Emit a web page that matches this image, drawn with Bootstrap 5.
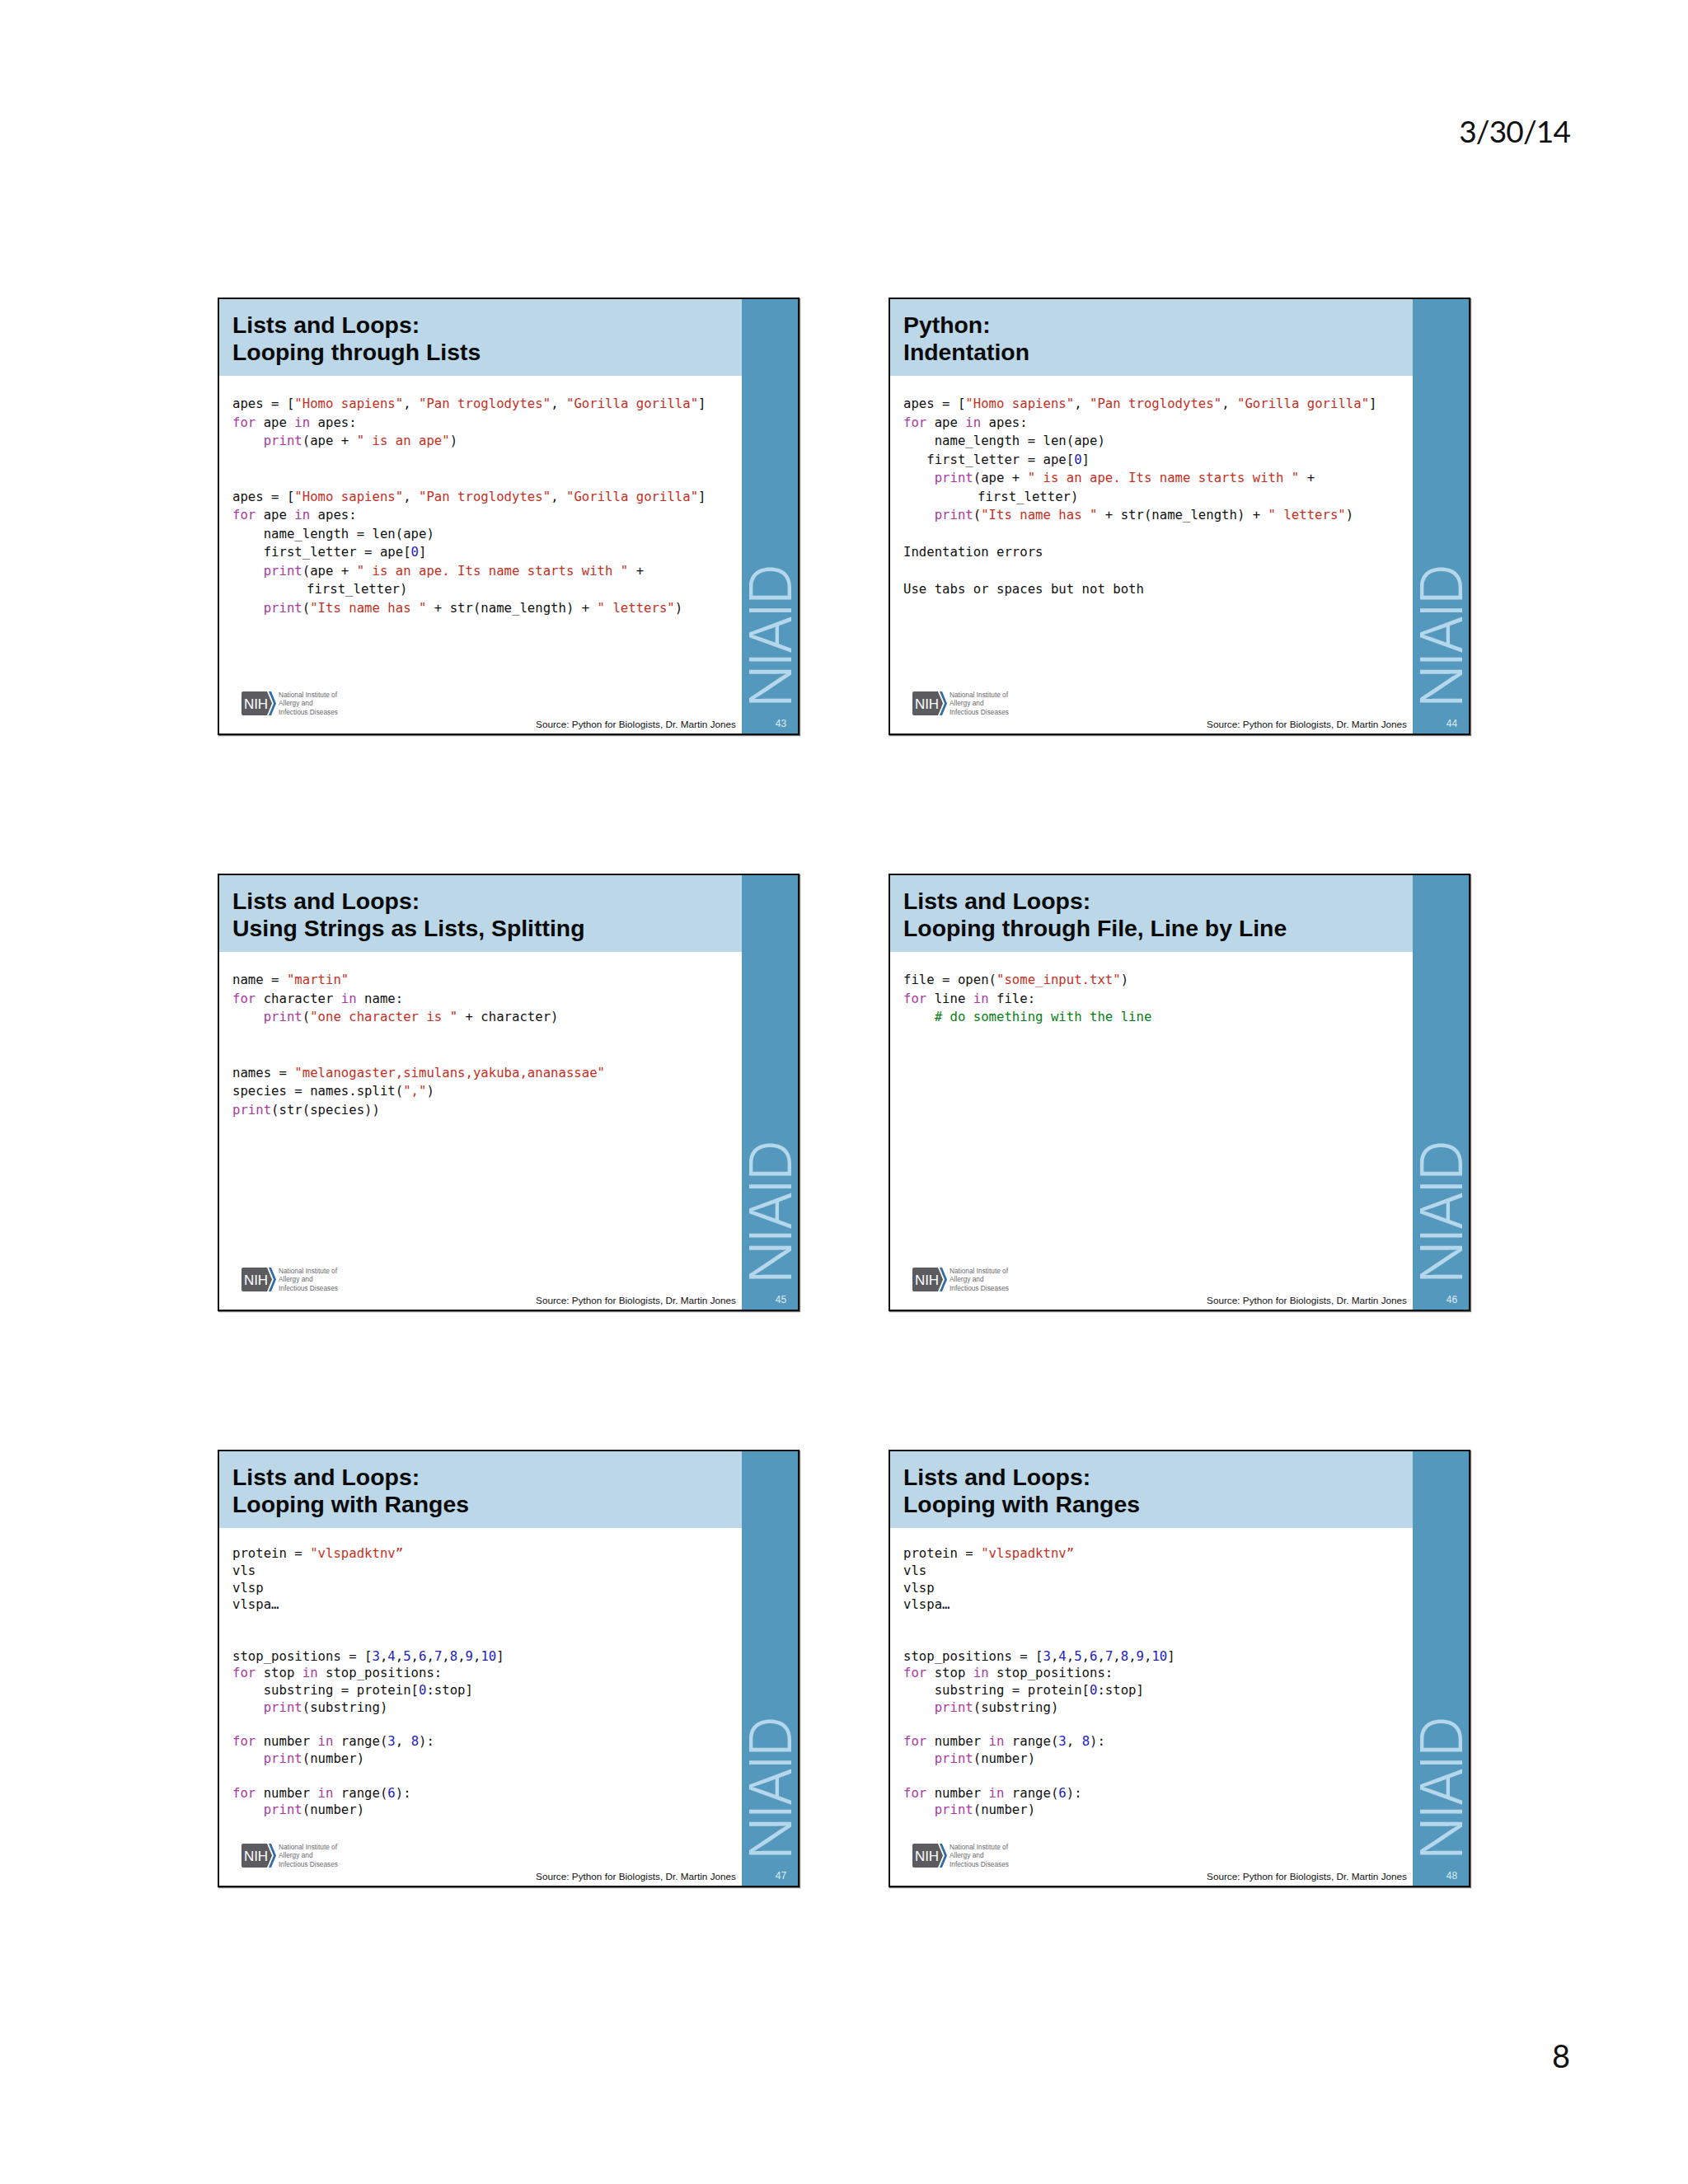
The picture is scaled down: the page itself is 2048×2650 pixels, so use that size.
<!DOCTYPE html>
<html lang="en"><head><meta charset="utf-8"><title>Slides</title>
<link rel="stylesheet" href="https://cdn.jsdelivr.net/npm/bootstrap@5.3.0/dist/css/bootstrap.min.css">
<style>
body{background:#fff;color:#000;width:2048px;height:2650px;overflow:hidden;font-family:"Liberation Sans",Arial,sans-serif}
.handout{padding:130px 143px 0 264px;height:2650px}
.date-line{font-family:Lato,"Open Sans",sans-serif;font-size:37px;letter-spacing:-.85px;line-height:58px;height:231px;color:#111}
.sheet{grid-template-columns:706px 706px;column-gap:108px;row-gap:168px;width:1522px}
.slide{width:706px;height:531px;border:2px solid #111;box-shadow:1px 1px 1px #777;background:#fff}
.slide-main{width:636px}
.slide-head{height:93px;background:#bcd7e7;padding:15px 16px 0;font-weight:700;font-size:28.4px;line-height:33px;color:#0a0a0a}
.code{padding:23px 16px 0;font-family:"DejaVu Sans Mono",monospace;font-size:15.65px;line-height:22.5px;color:#111}
.code.tight{line-height:20.75px;padding-top:21px}
.code-line{height:22.5px;white-space:pre}
.tight .code-line{height:20.75px}
.kw{color:#a63a9e}.st{color:#c4301f}.nu{color:#2222c0}.cm{color:#0a7d18}
.hang{padding-left:90px}
.slide-foot{padding:0 7px 4px 27px}
.nih-logo{gap:3px;margin-bottom:17px}
.nih-text{font-size:8.3px;line-height:10.4px;color:#6a6a6e}
.source{font-size:11.75px;line-height:14px;color:#111}
.slide-side{width:68px;background:#5499bd;color:#dcecf5;padding-bottom:5px}
.niaid{writing-mode:vertical-rl;transform:rotate(180deg);font-family:Inter,"Liberation Sans",sans-serif;font-weight:300;font-size:70px;line-height:68px;letter-spacing:-3px;color:#b5d7ec;margin-bottom:12px;padding-right:2px}
.slide-no{font-size:12px;line-height:14px;padding-left:27px}
.page-no{font-family:Lato,"Open Sans",sans-serif;font-size:38px;line-height:48px;margin-top:180px;color:#111}
</style></head>
<body>
<div class="handout">
<div class="date-line text-end">3/30/14</div>
<div class="sheet d-grid">

<section class="slide d-flex">
<div class="slide-main d-flex flex-column">
<div class="slide-head flex-shrink-0"><div>Lists and Loops:</div><div>Looping through Lists</div></div>
<div class="code flex-grow-1">
<div class="code-line"><span>apes = [</span><span class="st">"Homo sapiens"</span><span>, </span><span class="st">"Pan troglodytes"</span><span>, </span><span class="st">"Gorilla gorilla"</span><span>]</span></div>
<div class="code-line"><span class="kw">for</span><span> ape </span><span class="kw">in</span><span> apes:</span></div>
<div class="code-line"><span>    </span><span class="kw">print</span><span>(ape + </span><span class="st">" is an ape"</span><span>)</span></div>
<div class="code-line"></div>
<div class="code-line"></div>
<div class="code-line"><span>apes = [</span><span class="st">"Homo sapiens"</span><span>, </span><span class="st">"Pan troglodytes"</span><span>, </span><span class="st">"Gorilla gorilla"</span><span>]</span></div>
<div class="code-line"><span class="kw">for</span><span> ape </span><span class="kw">in</span><span> apes:</span></div>
<div class="code-line"><span>    name_length = len(ape)</span></div>
<div class="code-line"><span>    first_letter = ape[</span><span class="nu">0</span><span>]</span></div>
<div class="code-line"><span>    </span><span class="kw">print</span><span>(ape + </span><span class="st">" is an ape. Its name starts with "</span><span> +</span></div>
<div class="code-line hang"><span>first_letter)</span></div>
<div class="code-line"><span>    </span><span class="kw">print</span><span>(</span><span class="st">"Its name has "</span><span> + str(name_length) + </span><span class="st">" letters"</span><span>)</span></div>
</div>
<div class="slide-foot d-flex justify-content-between align-items-end">
<div class="nih-logo d-flex align-items-center"><svg width="42" height="29" viewBox="0 0 42 29" aria-hidden="true"><path d="M2 0H31L37 14.5L31 29H2a2 2 0 0 1-2-2V2a2 2 0 0 1 2-2Z" fill="#5c5c60"/><path d="M33 0H36L42 14.5L36 29H33L39 14.5Z" fill="#2f6da4"/><text x="3" y="20.5" font-family="Liberation Sans" font-size="17" fill="#fff" textLength="29">NIH</text></svg><div class="nih-text"><div>National Institute of</div><div>Allergy and</div><div>Infectious Diseases</div></div></div>
<div class="source">Source: Python for Biologists, Dr. Martin Jones</div>
</div>
</div>
<div class="slide-side d-flex flex-column align-items-center justify-content-end"><div class="niaid">NIAID</div><div class="slide-no">43</div></div>
</section>

<section class="slide d-flex">
<div class="slide-main d-flex flex-column">
<div class="slide-head flex-shrink-0"><div>Python:</div><div>Indentation</div></div>
<div class="code flex-grow-1">
<div class="code-line"><span>apes = [</span><span class="st">"Homo sapiens"</span><span>, </span><span class="st">"Pan troglodytes"</span><span>, </span><span class="st">"Gorilla gorilla"</span><span>]</span></div>
<div class="code-line"><span class="kw">for</span><span> ape </span><span class="kw">in</span><span> apes:</span></div>
<div class="code-line"><span>    name_length = len(ape)</span></div>
<div class="code-line"><span>   first_letter = ape[</span><span class="nu">0</span><span>]</span></div>
<div class="code-line"><span>    </span><span class="kw">print</span><span>(ape + </span><span class="st">" is an ape. Its name starts with "</span><span> +</span></div>
<div class="code-line hang"><span>first_letter)</span></div>
<div class="code-line"><span>    </span><span class="kw">print</span><span>(</span><span class="st">"Its name has "</span><span> + str(name_length) + </span><span class="st">" letters"</span><span>)</span></div>
<div class="code-line"></div>
<div class="code-line">Indentation errors</div>
<div class="code-line"></div>
<div class="code-line">Use tabs or spaces but not both</div>
</div>
<div class="slide-foot d-flex justify-content-between align-items-end">
<div class="nih-logo d-flex align-items-center"><svg width="42" height="29" viewBox="0 0 42 29" aria-hidden="true"><path d="M2 0H31L37 14.5L31 29H2a2 2 0 0 1-2-2V2a2 2 0 0 1 2-2Z" fill="#5c5c60"/><path d="M33 0H36L42 14.5L36 29H33L39 14.5Z" fill="#2f6da4"/><text x="3" y="20.5" font-family="Liberation Sans" font-size="17" fill="#fff" textLength="29">NIH</text></svg><div class="nih-text"><div>National Institute of</div><div>Allergy and</div><div>Infectious Diseases</div></div></div>
<div class="source">Source: Python for Biologists, Dr. Martin Jones</div>
</div>
</div>
<div class="slide-side d-flex flex-column align-items-center justify-content-end"><div class="niaid">NIAID</div><div class="slide-no">44</div></div>
</section>

<section class="slide d-flex">
<div class="slide-main d-flex flex-column">
<div class="slide-head flex-shrink-0"><div>Lists and Loops:</div><div>Using Strings as Lists, Splitting</div></div>
<div class="code flex-grow-1">
<div class="code-line"><span>name = </span><span class="st">"martin"</span></div>
<div class="code-line"><span class="kw">for</span><span> character </span><span class="kw">in</span><span> name:</span></div>
<div class="code-line"><span>    </span><span class="kw">print</span><span>(</span><span class="st">"one character is "</span><span> + character)</span></div>
<div class="code-line"></div>
<div class="code-line"></div>
<div class="code-line"><span>names = </span><span class="st">"melanogaster,simulans,yakuba,ananassae"</span></div>
<div class="code-line"><span>species = names.split(</span><span class="st">","</span><span>)</span></div>
<div class="code-line"><span class="kw">print</span><span>(str(species))</span></div>
</div>
<div class="slide-foot d-flex justify-content-between align-items-end">
<div class="nih-logo d-flex align-items-center"><svg width="42" height="29" viewBox="0 0 42 29" aria-hidden="true"><path d="M2 0H31L37 14.5L31 29H2a2 2 0 0 1-2-2V2a2 2 0 0 1 2-2Z" fill="#5c5c60"/><path d="M33 0H36L42 14.5L36 29H33L39 14.5Z" fill="#2f6da4"/><text x="3" y="20.5" font-family="Liberation Sans" font-size="17" fill="#fff" textLength="29">NIH</text></svg><div class="nih-text"><div>National Institute of</div><div>Allergy and</div><div>Infectious Diseases</div></div></div>
<div class="source">Source: Python for Biologists, Dr. Martin Jones</div>
</div>
</div>
<div class="slide-side d-flex flex-column align-items-center justify-content-end"><div class="niaid">NIAID</div><div class="slide-no">45</div></div>
</section>

<section class="slide d-flex">
<div class="slide-main d-flex flex-column">
<div class="slide-head flex-shrink-0"><div>Lists and Loops:</div><div>Looping through File, Line by Line</div></div>
<div class="code flex-grow-1">
<div class="code-line"><span>file = open(</span><span class="st">"some_input.txt"</span><span>)</span></div>
<div class="code-line"><span class="kw">for</span><span> line </span><span class="kw">in</span><span> file:</span></div>
<div class="code-line"><span>    </span><span class="cm"># do something with the line</span></div>
</div>
<div class="slide-foot d-flex justify-content-between align-items-end">
<div class="nih-logo d-flex align-items-center"><svg width="42" height="29" viewBox="0 0 42 29" aria-hidden="true"><path d="M2 0H31L37 14.5L31 29H2a2 2 0 0 1-2-2V2a2 2 0 0 1 2-2Z" fill="#5c5c60"/><path d="M33 0H36L42 14.5L36 29H33L39 14.5Z" fill="#2f6da4"/><text x="3" y="20.5" font-family="Liberation Sans" font-size="17" fill="#fff" textLength="29">NIH</text></svg><div class="nih-text"><div>National Institute of</div><div>Allergy and</div><div>Infectious Diseases</div></div></div>
<div class="source">Source: Python for Biologists, Dr. Martin Jones</div>
</div>
</div>
<div class="slide-side d-flex flex-column align-items-center justify-content-end"><div class="niaid">NIAID</div><div class="slide-no">46</div></div>
</section>

<section class="slide d-flex">
<div class="slide-main d-flex flex-column">
<div class="slide-head flex-shrink-0"><div>Lists and Loops:</div><div>Looping with Ranges</div></div>
<div class="code tight flex-grow-1">
<div class="code-line"><span>protein = </span><span class="st">"vlspadktnv”</span></div>
<div class="code-line">vls</div>
<div class="code-line">vlsp</div>
<div class="code-line">vlspa…</div>
<div class="code-line"></div>
<div class="code-line"></div>
<div class="code-line"><span>stop_positions = [</span><span class="nu">3</span><span>,</span><span class="nu">4</span><span>,</span><span class="nu">5</span><span>,</span><span class="nu">6</span><span>,</span><span class="nu">7</span><span>,</span><span class="nu">8</span><span>,</span><span class="nu">9</span><span>,</span><span class="nu">10</span><span>]</span></div>
<div class="code-line"><span class="kw">for</span><span> stop </span><span class="kw">in</span><span> stop_positions:</span></div>
<div class="code-line"><span>    substring = protein[</span><span class="nu">0</span><span>:stop]</span></div>
<div class="code-line"><span>    </span><span class="kw">print</span><span>(substring)</span></div>
<div class="code-line"></div>
<div class="code-line"><span class="kw">for</span><span> number </span><span class="kw">in</span><span> range(</span><span class="nu">3</span><span>, </span><span class="nu">8</span><span>):</span></div>
<div class="code-line"><span>    </span><span class="kw">print</span><span>(number)</span></div>
<div class="code-line"></div>
<div class="code-line"><span class="kw">for</span><span> number </span><span class="kw">in</span><span> range(</span><span class="nu">6</span><span>):</span></div>
<div class="code-line"><span>    </span><span class="kw">print</span><span>(number)</span></div>
</div>
<div class="slide-foot d-flex justify-content-between align-items-end">
<div class="nih-logo d-flex align-items-center"><svg width="42" height="29" viewBox="0 0 42 29" aria-hidden="true"><path d="M2 0H31L37 14.5L31 29H2a2 2 0 0 1-2-2V2a2 2 0 0 1 2-2Z" fill="#5c5c60"/><path d="M33 0H36L42 14.5L36 29H33L39 14.5Z" fill="#2f6da4"/><text x="3" y="20.5" font-family="Liberation Sans" font-size="17" fill="#fff" textLength="29">NIH</text></svg><div class="nih-text"><div>National Institute of</div><div>Allergy and</div><div>Infectious Diseases</div></div></div>
<div class="source">Source: Python for Biologists, Dr. Martin Jones</div>
</div>
</div>
<div class="slide-side d-flex flex-column align-items-center justify-content-end"><div class="niaid">NIAID</div><div class="slide-no">47</div></div>
</section>

<section class="slide d-flex">
<div class="slide-main d-flex flex-column">
<div class="slide-head flex-shrink-0"><div>Lists and Loops:</div><div>Looping with Ranges</div></div>
<div class="code tight flex-grow-1">
<div class="code-line"><span>protein = </span><span class="st">"vlspadktnv”</span></div>
<div class="code-line">vls</div>
<div class="code-line">vlsp</div>
<div class="code-line">vlspa…</div>
<div class="code-line"></div>
<div class="code-line"></div>
<div class="code-line"><span>stop_positions = [</span><span class="nu">3</span><span>,</span><span class="nu">4</span><span>,</span><span class="nu">5</span><span>,</span><span class="nu">6</span><span>,</span><span class="nu">7</span><span>,</span><span class="nu">8</span><span>,</span><span class="nu">9</span><span>,</span><span class="nu">10</span><span>]</span></div>
<div class="code-line"><span class="kw">for</span><span> stop </span><span class="kw">in</span><span> stop_positions:</span></div>
<div class="code-line"><span>    substring = protein[</span><span class="nu">0</span><span>:stop]</span></div>
<div class="code-line"><span>    </span><span class="kw">print</span><span>(substring)</span></div>
<div class="code-line"></div>
<div class="code-line"><span class="kw">for</span><span> number </span><span class="kw">in</span><span> range(</span><span class="nu">3</span><span>, </span><span class="nu">8</span><span>):</span></div>
<div class="code-line"><span>    </span><span class="kw">print</span><span>(number)</span></div>
<div class="code-line"></div>
<div class="code-line"><span class="kw">for</span><span> number </span><span class="kw">in</span><span> range(</span><span class="nu">6</span><span>):</span></div>
<div class="code-line"><span>    </span><span class="kw">print</span><span>(number)</span></div>
</div>
<div class="slide-foot d-flex justify-content-between align-items-end">
<div class="nih-logo d-flex align-items-center"><svg width="42" height="29" viewBox="0 0 42 29" aria-hidden="true"><path d="M2 0H31L37 14.5L31 29H2a2 2 0 0 1-2-2V2a2 2 0 0 1 2-2Z" fill="#5c5c60"/><path d="M33 0H36L42 14.5L36 29H33L39 14.5Z" fill="#2f6da4"/><text x="3" y="20.5" font-family="Liberation Sans" font-size="17" fill="#fff" textLength="29">NIH</text></svg><div class="nih-text"><div>National Institute of</div><div>Allergy and</div><div>Infectious Diseases</div></div></div>
<div class="source">Source: Python for Biologists, Dr. Martin Jones</div>
</div>
</div>
<div class="slide-side d-flex flex-column align-items-center justify-content-end"><div class="niaid">NIAID</div><div class="slide-no">48</div></div>
</section>

</div>
<div class="page-no text-end">8</div>
</div>
<script src="https://cdn.jsdelivr.net/npm/bootstrap@5.3.0/dist/js/bootstrap.bundle.min.js"></script>
</body></html>
